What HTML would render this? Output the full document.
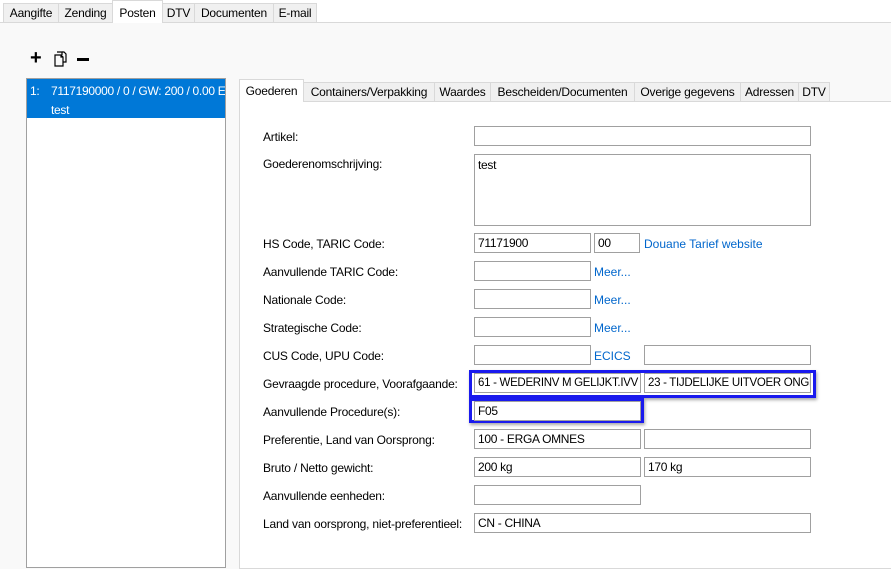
<html><head><style>
body{margin:0;width:891px;height:566px;background:#f9f9f9;font-family:"Liberation Sans",sans-serif;font-size:12px;color:#000;position:relative;overflow:hidden}
.a{position:absolute}
.tab{position:absolute;top:3px;height:19px;background:#f0f0f0;border:1px solid #d9d9d9;border-bottom:none;box-sizing:border-box;text-align:center;line-height:19px;font-size:12px;letter-spacing:-0.2px}
.itab{position:absolute;top:82px;height:19px;background:#f0f0f0;border:1px solid #d9d9d9;border-bottom:none;box-sizing:border-box;text-align:center;line-height:19px;font-size:12px;letter-spacing:-0.2px;white-space:nowrap}
.in{position:absolute;height:20px;background:#fff;border:1px solid #a0a0a0;box-sizing:border-box;line-height:18px;padding-left:3px;font-size:12px;white-space:nowrap;overflow:hidden;letter-spacing:-0.3px}
.lb{position:absolute;left:263px;font-size:12px;letter-spacing:-0.2px}
.lk{position:absolute;color:#0066cc;font-size:12px}
.hl{position:absolute;border:3px solid #1a1aee;box-sizing:border-box;box-shadow:1px 2px 3px rgba(0,0,0,.35)}
</style></head><body>
<div class="a" style="left:0;top:0;width:891px;height:22px;background:#fff;border-bottom:1px solid #d9d9d9"></div>
<div class="tab" style="left:3px;width:56px">Aangifte</div>
<div class="tab" style="left:58px;width:55px">Zending</div>
<div class="tab" style="left:112px;top:0;height:23px;width:51px;background:#fff;line-height:24px">Posten</div>
<div class="tab" style="left:162px;width:33px">DTV</div>
<div class="tab" style="left:194px;width:80px">Documenten</div>
<div class="tab" style="left:273px;width:44px">E-mail</div>
<div class="a" style="left:30px;top:50px;font-size:20px;font-weight:bold;line-height:16px">+</div>
<svg class="a" style="left:52px;top:50px" width="18" height="18" viewBox="0 0 18 18" fill="none" stroke="#000" stroke-width="1.2"><path d="M5 2h5v3M3 5h6l2 2v9H3z M9 5v2h2"/><path d="M10 2h2l2 2v8h-3"/></svg>
<div class="a" style="left:77px;top:58px;width:12px;height:3px;background:#000"></div>
<div class="a" style="left:26px;top:78px;width:200px;height:490px;background:#fff;border:1px solid #a0a0a0;box-sizing:border-box"></div>
<div class="a" style="left:27px;top:79px;width:198px;height:39px;background:#0078d7;color:#fff;overflow:hidden;white-space:nowrap;letter-spacing:-0.3px">
<div class="a" style="left:3px;top:5px">1:</div><div class="a" style="left:24px;top:5px">7117190000 / 0 / GW: 200 / 0.00 EUR</div><div class="a" style="left:24px;top:24px">test</div></div>
<div class="a" style="left:239px;top:101px;width:660px;height:466px;background:#fff;border:1px solid #d9d9d9"></div>
<div class="itab" style="left:239px;top:79px;height:23px;width:65px;background:#fff;line-height:23px">Goederen</div>
<div class="itab" style="left:303px;width:132px">Containers/Verpakking</div>
<div class="itab" style="left:434px;width:57px">Waardes</div>
<div class="itab" style="left:490px;width:145px">Bescheiden/Documenten</div>
<div class="itab" style="left:634px;width:107px">Overige gegevens</div>
<div class="itab" style="left:740px;width:59px">Adressen</div>
<div class="itab" style="left:798px;width:32px">DTV</div>

<div class="lb" style="top:130px">Artikel:</div><div class="in" style="left:474px;top:126px;width:337px"></div>
<div class="lb" style="top:157px">Goederenomschrijving:</div><div class="in" style="left:474px;top:154px;width:337px;height:72px;line-height:20px">test</div>
<div class="lb" style="top:237px">HS Code, TARIC Code:</div><div class="in" style="left:474px;top:233px;width:117px">71171900</div><div class="in" style="left:594px;top:233px;width:46px">00</div><div class="lk" style="left:644px;top:237px">Douane Tarief website</div>
<div class="lb" style="top:265px">Aanvullende TARIC Code:</div><div class="in" style="left:474px;top:261px;width:117px"></div><div class="lk" style="left:594px;top:265px">Meer...</div>
<div class="lb" style="top:293px">Nationale Code:</div><div class="in" style="left:474px;top:289px;width:117px"></div><div class="lk" style="left:594px;top:293px">Meer...</div>
<div class="lb" style="top:321px">Strategische Code:</div><div class="in" style="left:474px;top:317px;width:117px"></div><div class="lk" style="left:594px;top:321px">Meer...</div>
<div class="lb" style="top:349px">CUS Code, UPU Code:</div><div class="in" style="left:474px;top:345px;width:117px"></div><div class="lk" style="left:594px;top:349px">ECICS</div><div class="in" style="left:644px;top:345px;width:167px"></div>
<div class="lb" style="top:377px">Gevraagde procedure, Voorafgaande:</div>
<div class="hl" style="left:469px;top:370px;width:347px;height:28px"></div>
<div class="in" style="left:474px;top:373px;width:167px;font-size:11.5px">61 - WEDERINV M GELIJKT.IVV</div><div class="in" style="left:644px;top:373px;width:167px;font-size:11.5px">23 - TIJDELIJKE UITVOER ONGE</div>
<div class="lb" style="top:405px">Aanvullende Procedure(s):</div>
<div class="hl" style="left:469px;top:398px;width:175px;height:25px"></div>
<div class="in" style="left:474px;top:401px;width:167px">F05</div>
<div class="lb" style="top:433px">Preferentie, Land van Oorsprong:</div><div class="in" style="left:474px;top:429px;width:167px">100 - ERGA OMNES</div><div class="in" style="left:644px;top:429px;width:167px"></div>
<div class="lb" style="top:461px">Bruto / Netto gewicht:</div><div class="in" style="left:474px;top:457px;width:167px">200 kg</div><div class="in" style="left:644px;top:457px;width:167px">170 kg</div>
<div class="lb" style="top:489px">Aanvullende eenheden:</div><div class="in" style="left:474px;top:485px;width:167px"></div>
<div class="lb" style="top:517px">Land van oorsprong, niet-preferentieel:</div><div class="in" style="left:474px;top:513px;width:337px">CN - CHINA</div>
</body></html>
